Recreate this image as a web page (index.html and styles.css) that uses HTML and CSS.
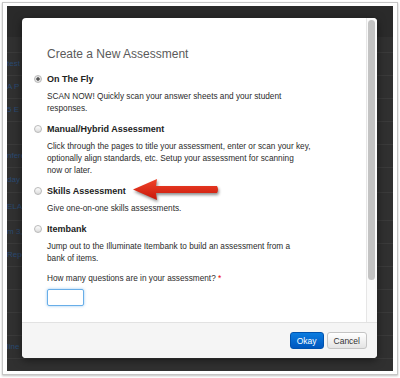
FILE: index.html
```html
<html>
<head>
	<title>Create a New Assessment</title>
	<meta charset="UTF-8" />
	<link rel="stylesheet" href="styles.css">
</head>
<body>
<div class="frame">
	<div class="screen">
		<div class="page">
			<div class="page-head"></div>
			<div class="page-sub"></div>
			<div class="row"><a>test</a></div>
			<div class="row"><a>A P</a></div>
			<div class="row"><a>5 E</a></div>
			<div class="row"></div>
			<div class="row"><a>nfere</a></div>
			<div class="row tall"><a>day S</a></div>
			<div class="row taller"><a>ELA</a></div>
			<div class="row"><a>m 3,</a></div>
			<div class="row"><a>Repo</a></div>
			<div class="row"></div>
			<div class="row"></div>
			<div class="row"></div>
			<div class="row"><a>line</a></div>
			<div class="row"></div>
		</div>

		<div class="modal">
			<div class="modal-main">
				<div class="modal-body">
					<h3 class="modal-title">Create a New Assessment</h3>

					<div class="option">
						<label class="option-label"><input type="radio" name="kind" checked> On The Fly</label>
						<p class="option-text">SCAN NOW! Quickly scan your answer sheets and your student<br>responses.</p>
					</div>
					<div class="option">
						<label class="option-label"><input type="radio" name="kind"> Manual/Hybrid Assessment</label>
						<p class="option-text">Click through the pages to title your assessment, enter or scan your key,<br>optionally align standards, etc. Setup your assessment for scanning<br>now or later.</p>
					</div>
					<div class="option">
						<label class="option-label"><input type="radio" name="kind"> Skills Assessment</label>
						<p class="option-text">Give one-on-one skills assessments.</p>
					</div>
					<div class="option">
						<label class="option-label"><input type="radio" name="kind"> Itembank</label>
						<p class="option-text">Jump out to the Illuminate Itembank to build an assessment from a<br>bank of items.</p>
					</div>

					<p class="question">How many questions are in your assessment? <span class="required">*</span></p>
					<input type="text" class="count">
				</div>
				<div class="scroll-track"><div class="scroll-thumb"></div></div>
			</div>
			<div class="modal-footer">
				<button class="btn btn-primary">Okay</button>
				<button class="btn">Cancel</button>
			</div>
		</div>
	</div>
</div>

<svg class="arrow" width="92" height="30" viewBox="0 0 92 30">
	<defs>
		<linearGradient id="red" x1="0" y1="0" x2="0" y2="1">
			<stop offset="0" stop-color="#f0442a"/>
			<stop offset="1" stop-color="#c8170a"/>
		</linearGradient>
	</defs>
	<path d="M4 14.5 L28 4 L27 11 L88 11 Q90 14.5 88 18 L27 18 L28 25 Z" fill="url(#red)"/>
</svg>
</body>
</html>
```

FILE: styles.css
```css
body {
	margin: 0;
	background: #fff;
	font-family: "Liberation Sans", Helvetica, Arial, sans-serif;
}

.frame {
	margin: 2px;
	width: 386px;
	height: 365px;
	padding: 3px 4px;
	border: 1px solid #c6c6c6;
	box-shadow: 0 1px 2px rgba(0, 0, 0, 0.25);
}

.screen {
	position: relative;
	width: 386px;
	height: 365px;
	overflow: hidden;
	background: #303030;
}

/* the page behind the dark backdrop */
.page-head {
	height: 31px;
	background: #2a2a2a;
}

.page-sub {
	height: 15px;
	border-bottom: 1px solid #3a3a3a;
}

.row {
	height: 22px;
	line-height: 22px;
	border-bottom: 1px solid #3a3a3a;
	font-size: 8px;
	white-space: nowrap;
}

.row.tall {
	height: 24px;
	line-height: 24px;
}

.row.taller {
	height: 27px;
	line-height: 27px;
}

.row a {
	color: #2a4a72;
}

/* modal */
.modal {
	position: absolute;
	left: 15px;
	top: 12px;
	width: 355px;
	height: 340px;
	display: flex;
	flex-direction: column;
	background: #fff;
	border-radius: 4px;
	box-shadow: 0 2px 8px rgba(0, 0, 0, 0.5);
	overflow: hidden;
}

.modal-main {
	flex: 1;
	display: flex;
	min-height: 0;
}

.modal-body {
	flex: 1;
	padding: 28px 0 0 25px;
	color: #2b2b2b;
}

.modal-title {
	margin: 0 0 11px;
	font-size: 12px;
	line-height: 16px;
	font-weight: normal;
	color: #5a5a5a;
}

.option {
	margin-bottom: 8px;
}

.option-label {
	display: flex;
	align-items: center;
	gap: 5px;
	margin-left: -13px;
	font-size: 9px;
	line-height: 12px;
	font-weight: bold;
	color: #222;
}

.option-label input {
	appearance: none;
	-webkit-appearance: none;
	margin: 0;
	width: 8px;
	height: 8px;
	border-radius: 50%;
	border: 1px solid #b9b9b9;
	background: linear-gradient(#fdfdfd, #dcdcdc);
}

.option-label input:checked {
	background: radial-gradient(circle, #555 0, #555 1.4px, #e4e4e4 2px);
}

.option-text {
	margin: 6px 0 0;
	font-size: 8.25px;
	line-height: 12px;
	white-space: nowrap;
}

.question {
	margin: 8px 0 4px;
	font-size: 8.25px;
	line-height: 12px;
}

.required {
	color: #e00;
}

.count {
	display: block;
	width: 37px;
	height: 17px;
	box-sizing: border-box;
	border: 1px solid #68aee8;
	border-radius: 2px;
	box-shadow: 0 0 3px rgba(80, 160, 230, 0.6);
	outline: none;
}

.scroll-track {
	width: 10px;
	border-left: 1px solid #e6e6e6;
	background: #fafafa;
}

.scroll-thumb {
	width: 7px;
	height: 260px;
	margin: 2px 0 0 1px;
	border-radius: 4px;
	background: #c3c3c3;
}

.modal-footer {
	display: flex;
	justify-content: flex-end;
	align-items: flex-start;
	gap: 3px;
	padding: 9px 10px 0 0;
	box-sizing: border-box;
	height: 36px;
	background: #f5f5f5;
	border-top: 1px solid #e2e2e2;
}

.btn {
	height: 17px;
	padding: 0 6px;
	font-family: inherit;
	font-size: 8.5px;
	color: #333;
	border: 1px solid #c4c4c4;
	border-radius: 3px;
	background: linear-gradient(#ffffff, #e4e4e4);
}

.btn-primary {
	color: #fff;
	border-color: #0052ad;
	background: linear-gradient(#0b7ce0, #0057bf);
}

.arrow {
	position: absolute;
	left: 129px;
	top: 175px;
	filter: drop-shadow(1px 2px 1.5px rgba(0, 0, 0, 0.45));
}
```
